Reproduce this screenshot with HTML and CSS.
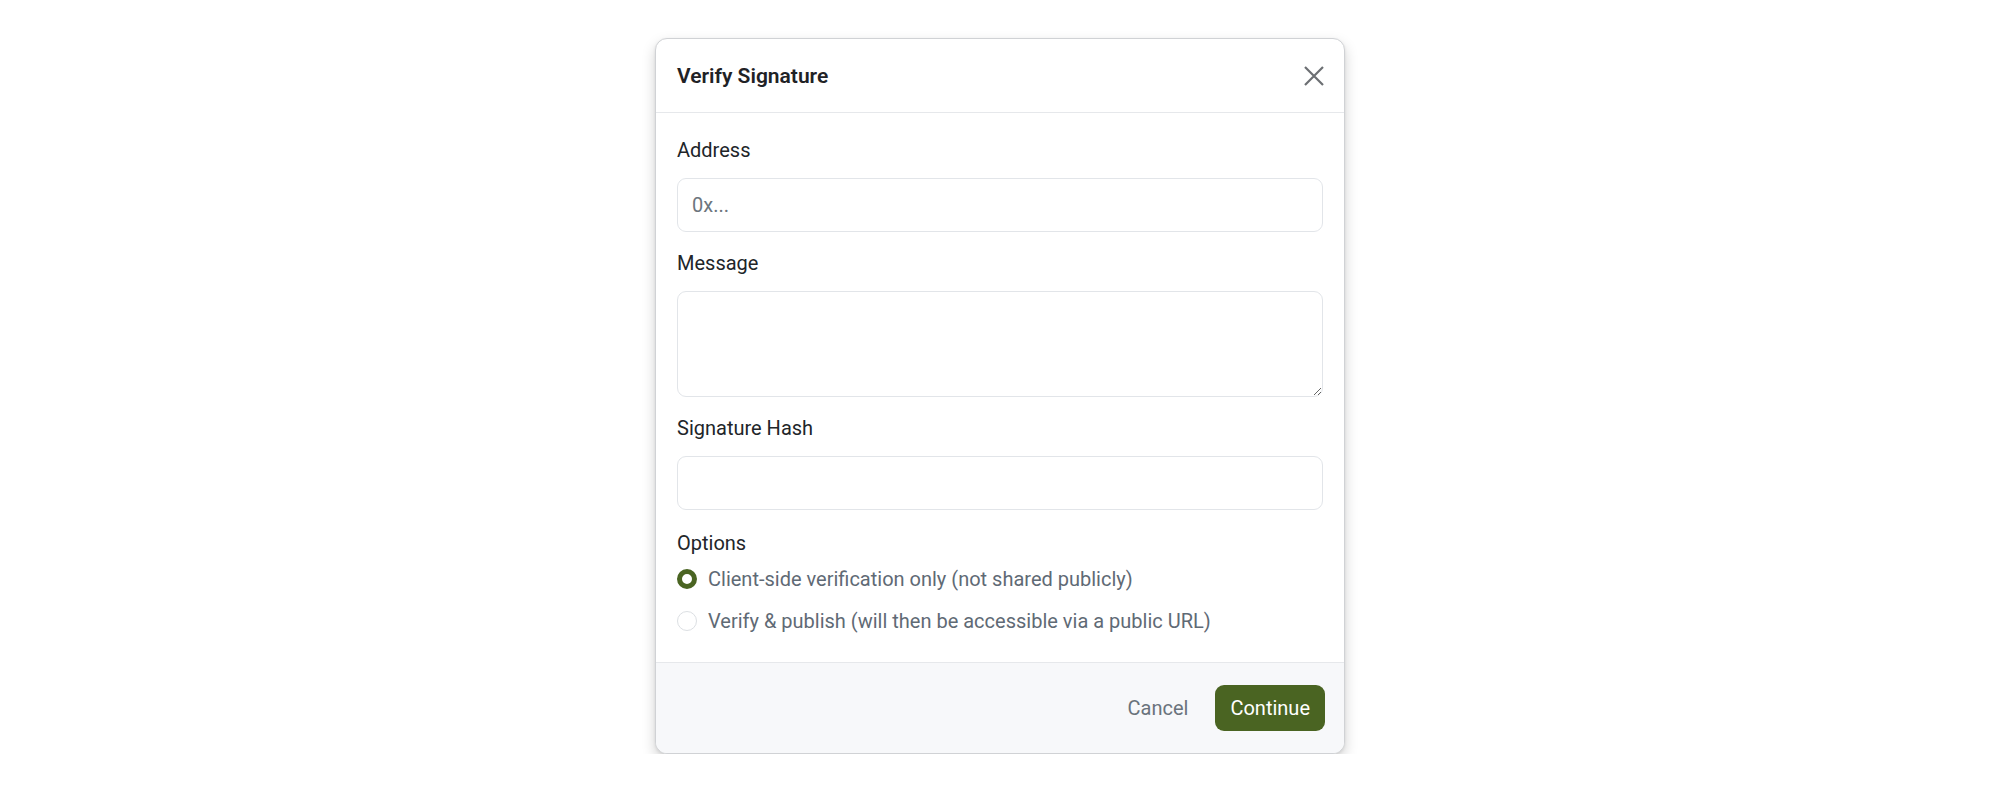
FILE: index.html
```html
<!DOCTYPE html>
<html lang="en">
<head>
<meta charset="utf-8">
<title>Verify Signature</title>
<link rel="stylesheet" href="styles.css">
</head>
<body>
<div class="page">
  <div class="modal">
    <div class="modal-header">
      <h5 class="modal-title">Verify Signature</h5>
      <button class="close-btn" type="button" aria-label="Close">
        <svg width="22" height="22" viewBox="0 0 22 22"><path d="M2 2 L20 20 M20 2 L2 20" stroke="#6c6f73" stroke-width="2.2" fill="none"/></svg>
      </button>
    </div>
    <div class="modal-body">
      <div class="group">
        <label class="label">Address</label>
        <input class="field" type="text" placeholder="0x...">
      </div>
      <div class="group">
        <label class="label">Message</label>
        <textarea class="field area"></textarea>
      </div>
      <div class="group">
        <label class="label">Signature Hash</label>
        <input class="field" type="text">
      </div>
      <div class="options">
        <div class="label options-label">Options</div>
        <label class="radio-row"><input class="radio" type="radio" name="opt" checked><span>Client-side verification only (not shared publicly)</span></label>
        <label class="radio-row"><input class="radio" type="radio" name="opt"><span>Verify &amp; publish (will then be accessible via a public URL)</span></label>
      </div>
    </div>
    <div class="modal-footer">
      <button class="btn btn-link" type="button">Cancel</button>
      <button class="btn btn-primary" type="button">Continue</button>
    </div>
  </div>
</div>
</body>
</html>
```

FILE: styles.css
```css
html, body {
  margin: 0;
  padding: 0;
  background: #ffffff;
}
body {
  font-family: Roboto, "Liberation Sans", sans-serif;
  font-size: 20px;
  color: #212529;
}
.page {
  display: flex;
  justify-content: center;
  padding-top: 38px;
}
.modal {
  width: 690px;
  box-sizing: border-box;
  background: #fff;
  border: 1px solid #d0d2d5;
  border-radius: 12px;
  box-shadow: 0 6px 14px rgba(0,0,0,0.18), 0 1px 3px rgba(0,0,0,0.08);
  overflow: hidden;
}
.modal-header {
  height: 74px;
  box-sizing: border-box;
  display: flex;
  align-items: center;
  justify-content: space-between;
  padding: 0 16px 0 21px;
  border-bottom: 1px solid #e6e8eb;
}
.modal-title {
  margin: 0;
  font-size: 21px;
  font-weight: 600;
  line-height: 28px;
  color: #1f2226;
}
.close-btn {
  background: none;
  border: 0;
  padding: 0;
  width: 28px;
  height: 28px;
  display: flex;
  align-items: center;
  justify-content: center;
  cursor: pointer;
}
.modal-body {
  padding: 23px 21px 25px;
}
.group {
  margin-bottom: 17px;
}
.label {
  display: block;
  font-size: 20px;
  line-height: 28px;
  margin-bottom: 14px;
  color: #212529;
}
.field {
  display: block;
  width: 100%;
  box-sizing: border-box;
  height: 54px;
  border: 1px solid #e2e5e9;
  border-radius: 9px;
  padding: 0 14px;
  font-family: Roboto, "Liberation Sans", sans-serif;
  font-size: 20px;
  color: #212529;
  background: #fff;
  outline: none;
}
.field::placeholder {
  color: #6c757d;
}
.area {
  height: 106px;
  padding: 10px 14px;
  resize: vertical;
}
.options {
  padding-top: 2px;
}
.options-label {
  margin-bottom: 6px;
}
.radio-row {
  display: flex;
  align-items: center;
  gap: 11px;
  height: 32px;
  margin-bottom: 10px;
  color: #5f6a75;
  font-size: 20px;
  cursor: pointer;
}
.radio-row:last-child {
  margin-bottom: 0;
}
.radio {
  appearance: none;
  -webkit-appearance: none;
  margin: 0;
  width: 20px;
  height: 20px;
  border-radius: 50%;
  border: 1px solid #dcdfe3;
  background: #fff;
  box-sizing: border-box;
  flex: none;
}
.radio:checked {
  border: 5px solid #4a6422;
  background: #fff;
}
.modal-footer {
  display: flex;
  justify-content: flex-end;
  align-items: center;
  gap: 12px;
  padding: 22px 19px 22px;
  background: #f7f8fa;
  border-top: 1px solid #e6e8eb;
}
.btn {
  font-family: Roboto, "Liberation Sans", sans-serif;
  font-size: 20px;
  line-height: 24px;
  height: 46px;
  padding: 0 15px;
  border-radius: 9px;
  border: 0;
  cursor: pointer;
}
.btn-link {
  background: transparent;
  color: #6a737c;
}
.btn-primary {
  background: #4a6422;
  color: #ffffff;
}
```
